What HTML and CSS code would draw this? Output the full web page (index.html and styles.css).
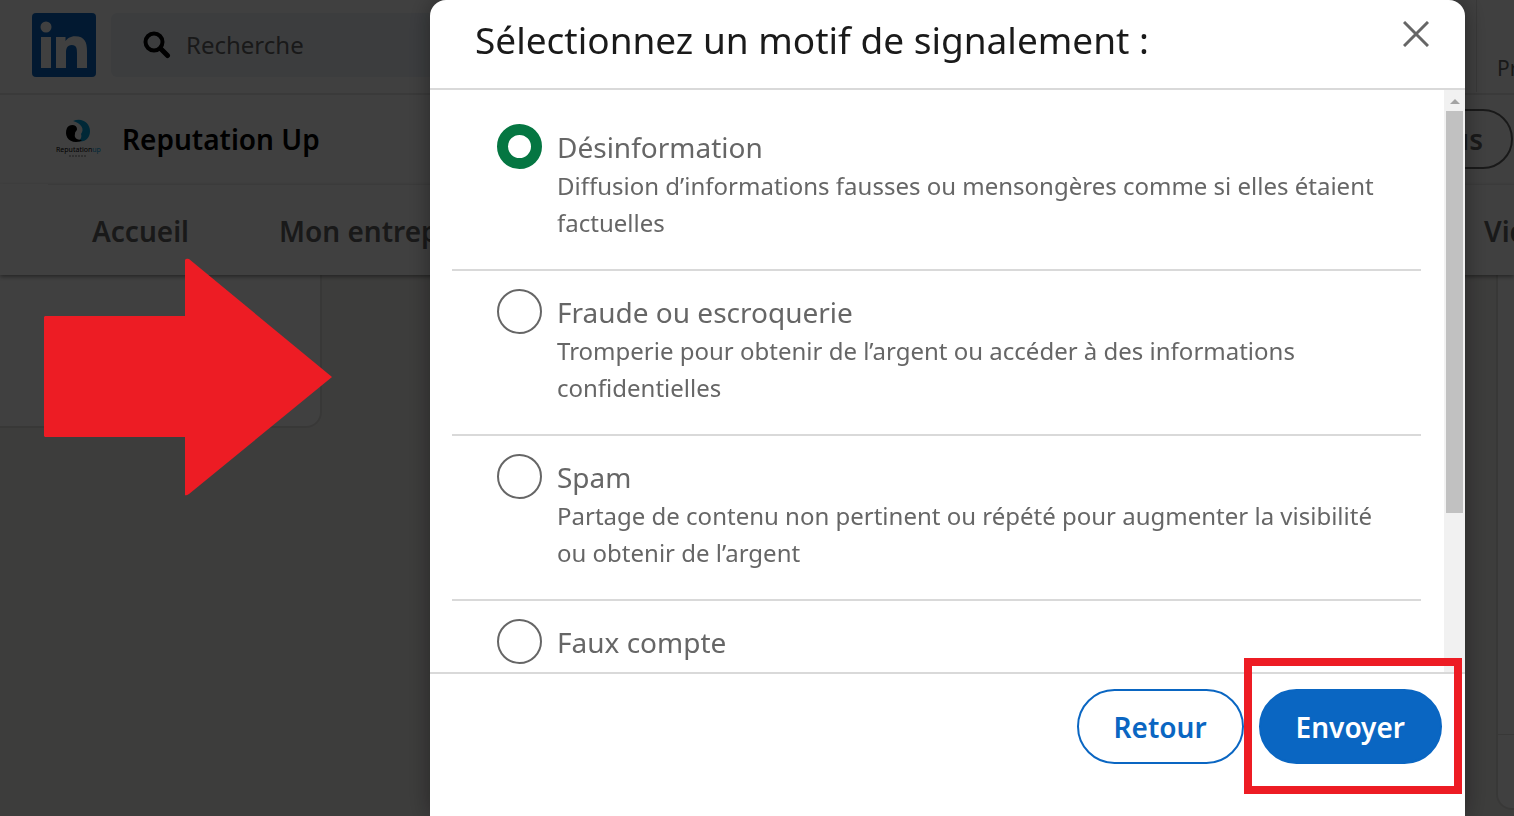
FILE: index.html
```html
<!DOCTYPE html>
<html lang="fr">
<head>
  <meta charset="UTF-8" />
  <meta name="viewport" content="width=device-width, initial-scale=1.0" />
  <title>Signaler – LinkedIn</title>
  <link rel="stylesheet" href="styles.css">
</head>
<body>
  <div class="page">
    <header class="topbar">
      <a href="#" class="brand" aria-label="LinkedIn">
        <svg viewBox="0 0 64 64" width="64" height="64">
          <rect width="64" height="64" rx="4" fill="#0a66c2"/>
          <circle cx="14" cy="14" r="5.5" fill="#fff"/>
          <path fill="#fff" d="M9 24h10v31H9zM24 24h9.500v4.300c1.400-2.700 4.800-5.100 9.500-5.100 9.800 0 12 6.200 12 14.800v17H45V40c0-3.900-.2-8-5.200-8s-5.800 4-5.800 8v15H24z"/>
        </svg>
      </a>
      <label class="search">
        <svg viewBox="0 0 28 28" width="28" height="28" fill="none" stroke="#000" stroke-linecap="round">
          <circle cx="11" cy="11" r="8.500" stroke-width="4"/>
          <path d="M17.500 17.500l7 7" stroke-width="5"/>
        </svg>
        <input type="text" placeholder="Recherche" aria-label="Recherche">
      </label>
      <a href="#" class="products">Produits</a>
    </header>

    <div class="company">
      <svg class="company-logo" viewBox="0 0 48 44" width="48" height="44">
        <path fill="#00a0dc" d="M19 4c9-4 17 2 17 10 0 7-5 12-13 10 4-1 5-4 4-7 4-5 0-11-8-13z"/>
        <path fill="#000" d="M23 12c0-5-8-5-10-1-3 7 1 14 9 14 3 0 5-1 6-2-6 0-8-3-7-6 0-3 2-3 2-5z"/>
        <text x="2" y="35" font-size="7">Reputation<tspan fill="#00a0dc">up</tspan></text>
        <path stroke="#777" stroke-dasharray="2 1" d="M15 39h18"/>
      </svg>
      <h1>Reputation Up</h1>
      <button type="button" class="more">Plus</button>
    </div>

    <nav class="tabs">
      <a href="#">Accueil</a>
      <a href="#">Mon entreprise</a>
      <a href="#" class="last">Vidéos</a>
    </nav>

    <main class="content">
      <div class="card side"></div>
      <div class="card feed"></div>
    </main>
  </div>

  <div class="overlay">
    <form class="modal" role="dialog" aria-labelledby="title">
      <div class="modal-head">
        <h2 id="title">Sélectionnez un motif de signalement :</h2>
        <button type="button" class="close" aria-label="Fermer">
          <svg viewBox="0 0 26 26" width="26" height="26" stroke="#666" stroke-width="3"><path d="M1 1l24 24M25 1L1 25"/></svg>
        </button>
      </div>

      <div class="modal-body">
        <div class="reasons">
          <div class="reason">
            <input type="radio" name="reason" id="r1" checked>
            <label for="r1">Désinformation
              <span>Diffusion d’informations fausses ou mensongères comme si elles étaient factuelles</span>
            </label>
          </div>
          <div class="reason">
            <input type="radio" name="reason" id="r2">
            <label for="r2">Fraude ou escroquerie
              <span>Tromperie pour obtenir de l’argent ou accéder à des informations confidentielles</span>
            </label>
          </div>
          <div class="reason">
            <input type="radio" name="reason" id="r3">
            <label for="r3">Spam
              <span>Partage de contenu non pertinent ou répété pour augmenter la visibilité ou obtenir de l’argent</span>
            </label>
          </div>
          <div class="reason">
            <input type="radio" name="reason" id="r4">
            <label for="r4">Faux compte
              <span>Membre au lieu de</span>
            </label>
          </div>
        </div>
        <div class="scrollbar" aria-hidden="true">
          <div class="arrow-up"></div>
          <div class="thumb"></div>
        </div>
      </div>

      <div class="modal-foot">
        <button type="button" class="btn">Retour</button>
        <div class="highlight">
          <button type="submit" class="btn primary">Envoyer</button>
        </div>
      </div>
    </form>
  </div>

  <svg class="pointer" viewBox="0 0 288 238" width="288" height="238" fill="#ed1c24">
    <path d="M1 58h140V2q1-2 4-1L288 119 145 236q-3 2-4 1v-58H1l-1-1V59z"/>
  </svg>
</body>
</html>
```

FILE: styles.css
```css
* {
  box-sizing: border-box;
}
body {
  margin: 0;
  height: 100vh;
  overflow: hidden;
  background: #f3f2ef;
  color: #000;
  font-family: "Noto Sans", "Open Sans", sans-serif;
}
a {
  color: inherit;
  text-decoration: none;
}
h1, h2 {
  margin: 0;
}
button, input {
  font-family: inherit;
}

/* page behind the dialog */
.page {
  height: 100vh;
  display: flex;
  flex-direction: column;
}
.topbar {
  display: flex;
  align-items: center;
  height: 95px;
  padding: 0 0 4px 32px;
  background: #fff;
  border-bottom: 2px solid #e6e6e6;
}
.brand {
  height: 64px;
}
.search {
  display: flex;
  align-items: center;
  width: 480px;
  height: 64px;
  margin-left: 15px;
  padding-left: 32px;
  border-radius: 6px;
  background: #eef3f8;
}
.search input {
  margin-left: 15px;
  padding: 0;
  border: 0;
  background: none;
  font-size: 24px;
}
.search input::placeholder {
  color: #666;
}
.products {
  display: flex;
  align-items: center;
  height: 95px;
  width: 38px;
  margin-left: auto;
  padding: 46px 0 0 20px;
  border-left: 1px solid #e0e0e0;
  color: #666;
  font-size: 21px;
}
.company {
  display: flex;
  align-items: center;
  height: 89px;
  padding: 0 1px 1px 54px;
  background: #fff;
}
.company-logo {
  margin-right: 20px;
}
.company h1 {
  font-size: 28px;
  font-weight: 600;
}
.more {
  width: 140px;
  height: 60px;
  margin-left: auto;
  border: 2px solid #666;
  border-radius: 30px;
  background: none;
  color: #666;
  font-size: 28px;
  font-weight: 600;
  text-align: right;
  padding-right: 28px;
}
.tabs {
  position: relative;
  display: flex;
  align-items: center;
  flex: none;
  gap: 90px;
  height: 91px;
  padding: 2px 0 0 92px;
  background: linear-gradient(#ebebeb, #ebebeb) 48px 0 / 100% 1px no-repeat #fff;
  box-shadow: 0 2px 4px rgba(0, 0, 0, .4);
  color: #666;
  font-size: 28px;
  font-weight: 600;
}
.tabs .last {
  width: 30px;
  margin-left: auto;
}
.content {
  display: flex;
  justify-content: space-between;
  flex: 1;
}
.card {
  background: #fff;
  box-shadow: 0 0 0 2px #e0dfdc;
}
.side {
  width: 320px;
  height: 151px;
  border-radius: 0 0 14px 0;
}
.feed {
  width: 16px;
  margin-bottom: 8px;
  padding-bottom: 74px;
  border-radius: 0 0 0 14px;
}
.feed::after {
  content: "";
  display: block;
  height: 100%;
  border-bottom: 1px solid #e0dfdc;
}

/* dialog */
.overlay {
  position: fixed;
  inset: 0;
  padding: 0 49px 0 430px;
  background: rgba(0, 0, 0, .75);
}
.modal {
  display: flex;
  flex-direction: column;
  height: 100%;
  border-radius: 16px 16px 0 0;
  background: #fff;
  box-shadow: 0 0 24px rgba(0, 0, 0, .4);
}
.modal-head {
  display: flex;
  justify-content: space-between;
  height: 90px;
  padding: 14px 36px 0 45px;
  border-bottom: 2px solid #d9d9d9;
}
.modal-head h2 {
  color: #1a1a1a;
  font-size: 37px;
  font-weight: 400;
  line-height: 52px;
}
.close {
  height: 44px;
  padding: 0;
  border: 0;
  background: none;
}
.modal-body {
  display: flex;
  flex: 1;
  min-height: 0;
  overflow: hidden;
}
.reasons {
  flex: 1;
  padding: 16px 23px 0 22px;
}
.reason {
  display: flex;
  align-items: flex-start;
  gap: 15px;
  padding: 18px 20px 28px 45px;
  border-bottom: 2px solid #d9d9d9;
}
.reason input {
  appearance: none;
  flex: none;
  width: 45px;
  height: 45px;
  margin: 0;
  border: 2px solid #666;
  border-radius: 50%;
}
.reason input:checked {
  border: 11px solid #057642;
}
.reason label {
  padding-top: 5px;
  color: #666;
  font-size: 28px;
  line-height: 37px;
}
.reason span {
  display: block;
  padding-top: 1px;
  font-size: 24px;
}
.scrollbar {
  width: 21px;
  padding: 0 2px;
  background: #f1f1f1;
}
.arrow-up {
  width: 9px;
  margin: 0 auto;
  padding-top: 9px;
  height: 21px;
}
.arrow-up::before {
  content: "";
  display: block;
  border: solid transparent;
  border-width: 0 5px 5px;
  border-bottom-color: #a3a3a3;
}
.thumb {
  height: 402px;
  background: #c1c1c1;
}
.modal-foot {
  display: flex;
  align-items: flex-start;
  justify-content: flex-end;
  gap: 15px;
  height: 144px;
  padding: 15px 23px 0 0;
  border-top: 2px solid #d9d9d9;
}
.btn {
  height: 75px;
  padding: 0 35px;
  border: 2px solid #0a66c2;
  border-radius: 38px;
  background: #fff;
  color: #0a66c2;
  font-size: 28px;
  font-weight: 600;
}
.btn.primary {
  background: #0a66c2;
  color: #fff;
}

/* red markers */
.highlight {
  position: relative;
}
.highlight::after {
  content: "";
  position: absolute;
  inset: -31px -20px -30px -15px;
  border: 8px solid #ed1c24;
  pointer-events: none;
}
.pointer {
  position: fixed;
  left: 44px;
  top: 258px;
}
```
